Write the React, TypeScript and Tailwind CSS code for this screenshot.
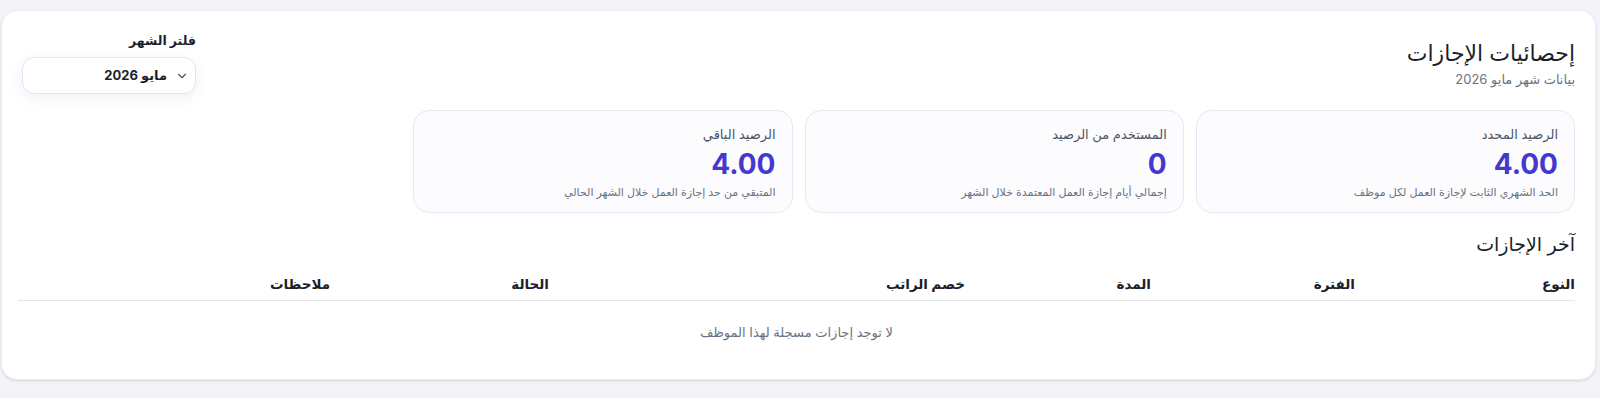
import { ChevronDown } from "lucide-react";

const stats = [
    { label: "الرصيد المحدد", value: "4.00", hint: "الحد الشهري الثابت لإجازة العمل لكل موظف" },
    { label: "المستخدم من الرصيد", value: "0", hint: "إجمالي أيام إجازة العمل المعتمدة خلال الشهر" },
    { label: "الرصيد الباقي", value: "4.00", hint: "المتبقي من حد إجازة العمل خلال الشهر الحالي" },
];

const columns = [
    { title: "النوع", width: "w-[220px]" },
    { title: "الفترة", width: "w-[204px]" },
    { title: "المدة", width: "w-[186px]" },
    { title: "خصم الراتب", width: "w-[416px]" },
    { title: "الحالة", width: "w-[219px]" },
    { title: "ملاحظات", width: "w-[312px]" },
];

export default function App() {
    return (
        <div
            dir="rtl"
            className="min-h-screen bg-[#f3f4f9] pt-[10px] pb-5 pr-1 pl-px text-[#1f2430]"
            style={{ fontFamily: '"Inter", "DejaVu Sans", sans-serif' }}
        >
            <div className="rounded-2xl border border-[#eceef6] bg-white px-5 pt-5 pb-4 shadow-sm">
                {/* header */}
                <div className="flex items-center justify-between">
                    <div>
                        <h1 className="text-[22px] leading-8 text-[#1c1f2a]">إحصائيات الإجازات</h1>
                        <p className="text-[13px] leading-5 text-gray-500">بيانات شهر مايو 2026</p>
                    </div>
                    <div className="w-[174px]">
                        <label className="mb-1.5 block text-[12.5px] leading-5 font-semibold text-[#1c1f2a]">فلتر الشهر</label>
                        <button className="flex h-[37px] w-full items-center gap-2 rounded-xl border border-[#e2e5f3] bg-white pr-[6px] pl-3 shadow-[0_4px_14px_rgba(120,130,180,0.12)]">
                            <ChevronDown className="h-3.5 w-3.5 text-gray-600" strokeWidth={2} />
                            <span className="text-[13px] font-bold text-[#1c1f2a]">مايو 2026</span>
                        </button>
                    </div>
                </div>

                {/* stats */}
                <div className="mt-4 grid grid-cols-4 gap-3">
                    {stats.map((s) => (
                        <div key={s.label} className="rounded-2xl border border-[#e6e8f3] bg-[#fcfcfe] px-4 pt-[13px] pb-3">
                            <div className="text-[13px] leading-5 text-gray-600">{s.label}</div>
                            <div className="mt-0.5 text-[28px] leading-9 font-bold text-[#4538d0]">{s.value}</div>
                            <div className="mt-0.5 text-[11px] leading-4 text-gray-500">{s.hint}</div>
                        </div>
                    ))}
                </div>

                {/* latest leaves */}
                <h2 className="mt-[18px] text-[19px] leading-7 text-[#1c1f2a]">آخر الإجازات</h2>
                <table className="mt-[9px] w-full table-fixed border-collapse text-sm">
                    <thead>
                        <tr className="border-b border-[#e3e4e8]">
                            {columns.map((c) => (
                                <th key={c.title} className={`${c.width} py-1.5 text-right text-[13.5px] leading-5 font-semibold text-[#1c1f2a]`}>
                                    {c.title}
                                </th>
                            ))}
                        </tr>
                    </thead>
                    <tbody>
                        <tr>
                            <td colSpan={6} className="py-[21px] text-center text-[13px] leading-5 text-gray-500">
                                لا توجد إجازات مسجلة لهذا الموظف
                            </td>
                        </tr>
                    </tbody>
                </table>
            </div>
        </div>
    );
}
